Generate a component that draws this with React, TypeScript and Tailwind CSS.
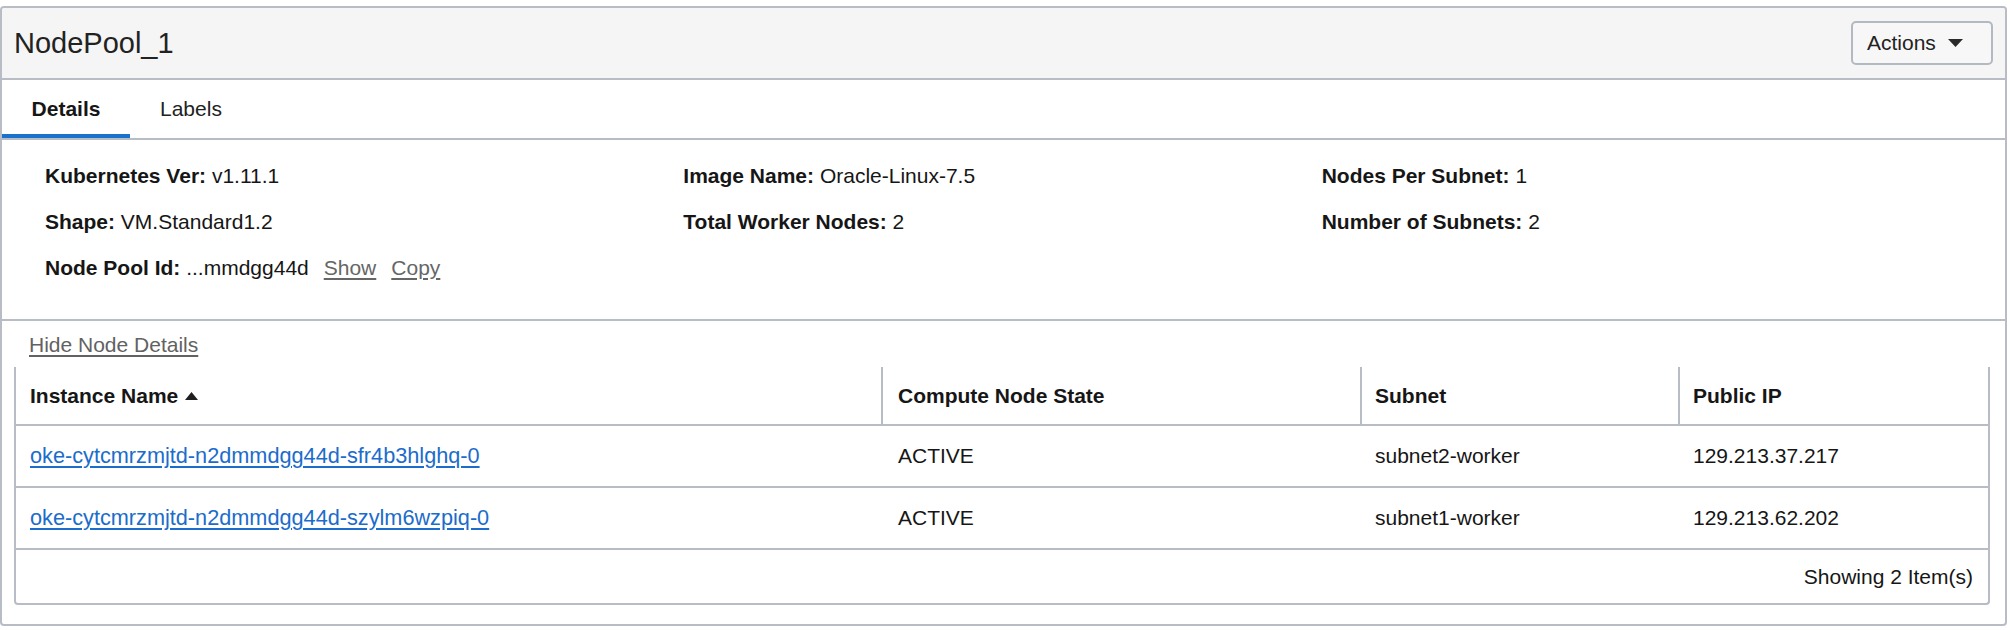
import React from "react";

const font = { fontFamily: '"Liberation Sans", Arial, Helvetica, sans-serif' };

function Field({ label, value, extra }: { label: string; value: string; extra?: boolean }) {
  return (
    <div className="flex items-center h-[24px] leading-[24px] whitespace-nowrap">
      <span className="font-bold">{label}</span>
      <span>&nbsp;{value}</span>
      {extra && (
        <>
          <span className="ml-[15px] text-[#666666] underline underline-offset-[3px]">Show</span>
          <span className="ml-[15px] text-[#666666] underline underline-offset-[3px]">Copy</span>
        </>
      )}
    </div>
  );
}

const rows = [
  {
    name: "oke-cytcmrzmjtd-n2dmmdgg44d-sfr4b3hlghq-0",
    state: "ACTIVE",
    subnet: "subnet2-worker",
    ip: "129.213.37.217",
  },
  {
    name: "oke-cytcmrzmjtd-n2dmmdgg44d-szylm6wzpiq-0",
    state: "ACTIVE",
    subnet: "subnet1-worker",
    ip: "129.213.62.202",
  },
];

export default function App() {
  return (
    <div className="w-[2010px] h-[630px] bg-white pt-[6px] text-[#161616]" style={font}>
      <div className="w-[2007px] h-[620px] border-2 border-[#b8bdc5] rounded-[4px] flex flex-col">
        {/* Header */}
        <div className="h-[72px] bg-[#f5f5f5] border-b-2 border-[#b8bdc5] flex items-center justify-between pl-[12px] pr-[12px] rounded-t-[3px]">
          <div className="text-[29px] leading-[34px] text-[#222222]">NodePool_1</div>
          <div className="h-[44px] w-[142px] border-2 border-[#b3b9c1] rounded-[5px] bg-[#f7f7f7] flex items-center pl-[14px] text-[21px] text-[#222222]">
            <span>Actions</span>
            <svg className="ml-[12px]" width="15" height="8" viewBox="0 0 15 8">
              <polygon points="0,0 15,0 7.5,8" fill="#2a2a2a" />
            </svg>
          </div>
        </div>

        {/* Tabs */}
        <div className="h-[60px] border-b-2 border-[#b8bdc5] flex text-[21px]">
          <div className="relative w-[128px] h-full flex items-center justify-center font-bold">
            Details
            <div className="absolute left-0 right-0 bottom-0 h-[4px] bg-[#1b72cc]" />
          </div>
          <div className="h-full flex items-center pl-[30px] text-[#222222]">Labels</div>
        </div>

        {/* Details */}
        <div className="border-b-2 border-[#b8bdc5] pt-[24px] pb-[39px] pl-[43px] pr-[45px] text-[21px]">
          <div className="grid grid-cols-3 gap-y-[22px]">
            <Field label="Kubernetes Ver:" value="v1.11.1" />
            <Field label="Image Name:" value="Oracle-Linux-7.5" />
            <Field label="Nodes Per Subnet:" value="1" />
            <Field label="Shape:" value="VM.Standard1.2" />
            <Field label="Total Worker Nodes:" value="2" />
            <Field label="Number of Subnets:" value="2" />
            <Field label="Node Pool Id:" value="...mmdgg44d" extra />
          </div>
        </div>

        {/* Hide link */}
        <div className="pl-[27px] pt-[12px] pb-[10px] h-[46px] text-[21px] leading-[24px]">
          <span className="text-[#626262] underline underline-offset-[3px]">Hide Node Details</span>
        </div>

        {/* Table */}
        <div className="ml-[12px] w-[1976px] border-x-2 border-b-2 border-[#b8bdc5] rounded-b-[4px] text-[21px]">
          <div className="grid grid-cols-[865px_479px_318px_1fr] h-[59px] border-b-2 border-[#b8bdc5] font-bold">
            <div className="flex items-center pl-[14px]">
              Instance Name
              <svg className="ml-[7px]" width="13" height="8" viewBox="0 0 13 8">
                <polygon points="0,8 13,8 6.5,0" fill="#1f1f1f" />
              </svg>
            </div>
            <div className="flex items-center pl-[15px] border-l-2 border-[#b8bdc5]">Compute Node State</div>
            <div className="flex items-center pl-[13px] border-l-2 border-[#b8bdc5]">Subnet</div>
            <div className="flex items-center pl-[13px] border-l-2 border-[#b8bdc5]">Public IP</div>
          </div>
          {rows.map((r) => (
            <div
              key={r.name}
              className="grid grid-cols-[865px_479px_318px_1fr] h-[62px] border-b-2 border-[#b8bdc5]"
            >
              <div className="flex items-center pl-[14px]">
                <span className="text-[#1b6ccb] underline underline-offset-[3px] text-[21.7px]">{r.name}</span>
              </div>
              <div className="flex items-center pl-[17px]">{r.state}</div>
              <div className="flex items-center pl-[15px]">{r.subnet}</div>
              <div className="flex items-center pl-[15px]">{r.ip}</div>
            </div>
          ))}
          <div className="h-[53px] flex items-center justify-end pr-[15px]">Showing 2 Item(s)</div>
        </div>
      </div>
    </div>
  );
}
